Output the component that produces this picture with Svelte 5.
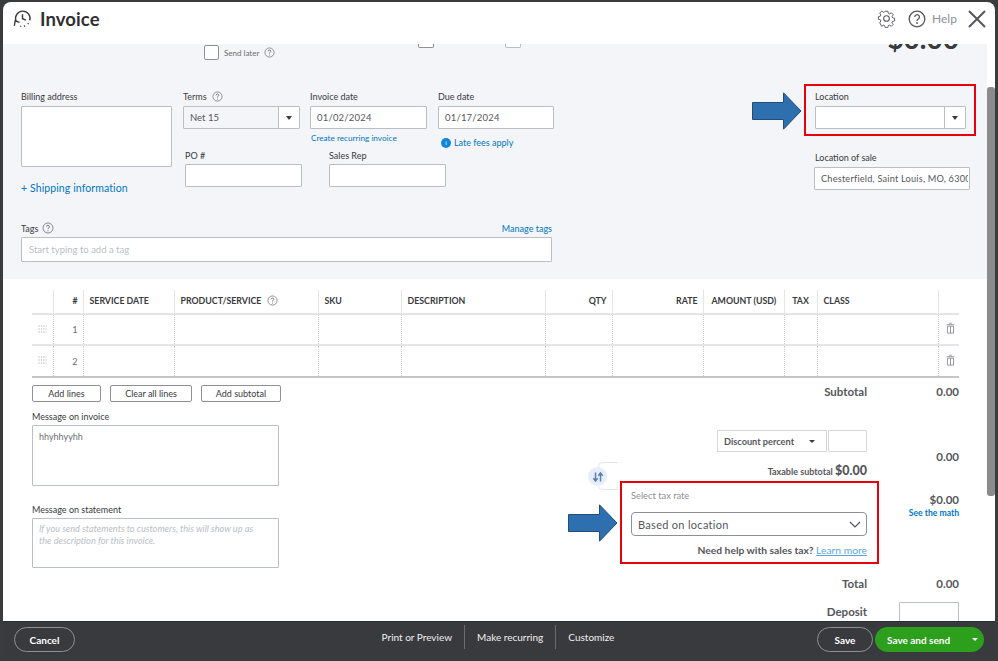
<script>
  const cols = [21, 30, 91, 144, 83, 144, 67, 91, 81, 33, 121, 21];
  const rows = [1, 2];
</script>

{#snippet help(cls = '')}
  <svg class="help {cls}" viewBox="0 0 12 12" aria-hidden="true"><circle cx="6" cy="6" r="5" fill="none" stroke="#7c7e84" stroke-width="0.9"/><path d="M4.6 4.7a1.4 1.4 0 1 1 2.1 1.2c-.5.3-.7.5-.7 1.1" fill="none" stroke="#5f6066" stroke-width="0.9"/><circle cx="6" cy="8.7" r=".55" fill="#5f6066"/></svg>
{/snippet}

{#snippet caret()}
  <span class="caret"><i></i></span>
{/snippet}

{#snippet trash()}
  <svg class="trash" viewBox="0 0 10 13" aria-hidden="true"><path d="M3.5 1.2h3M.8 2.8h8.4M1.6 4.5h6.8v7.7H1.6zM5 4.5v7.7" fill="none" stroke="#8d9096" stroke-width="1"/></svg>
{/snippet}

{#snippet grip()}
  <svg class="grip" viewBox="0 0 8 8" aria-hidden="true"><path d="M0 1h8M0 4h8M0 7h8" stroke="#a9abb0" stroke-width="1" stroke-dasharray="1.2 1.2"/></svg>
{/snippet}

<div class="frame">
  <header class="head">
    <svg class="logo" viewBox="0 0 20 20" aria-hidden="true">
      <path d="M3.2 12.5A7.6 7.6 0 1 1 17.6 12" fill="none" stroke="#393a3d" stroke-width="1.5"/>
      <path d="M1.4 17.8l.9-5.4 4.5 1.8" fill="none" stroke="#393a3d" stroke-width="1.4"/>
      <path d="M10 5.4v4.8l3.6 1.6" fill="none" stroke="#393a3d" stroke-width="1.5"/>
      <path d="M7.8 18.2h.9M11.6 18.1l1.2-.3M15.6 15.8l.7-.8" stroke="#393a3d" stroke-width="1.5"/>
    </svg>
    <h1>Invoice</h1>
    <div class="head-actions">
      <svg class="gear" viewBox="0 0 20 20" aria-hidden="true">
        <path d="M8.4 1.5h3.2l.5 2.4 1.5.7 2.1-1.3 2.2 2.3-1.3 2.1.6 1.5 2.3.5v3.1l-2.4.6-.6 1.4 1.3 2.1-2.2 2.2-2.1-1.3-1.5.6-.5 2.4H8.4l-.5-2.4-1.5-.6-2.1 1.3L2.1 15l1.3-2.1-.6-1.4-2.3-.6V7.8l2.3-.5.6-1.5L2.1 3.7l2.2-2.3 2.1 1.3 1.5-.7z" transform="translate(1 1) scale(.9)" fill="none" stroke="#55565b" stroke-width="1.1" stroke-linejoin="round"/>
        <circle cx="10" cy="10" r="3" fill="none" stroke="#55565b" stroke-width="1.1"/>
      </svg>
      <svg class="help-big" viewBox="0 0 18 18" aria-hidden="true"><circle cx="9" cy="9" r="7.8" fill="none" stroke="#55565b" stroke-width="1.3"/><path d="M6.8 7a2.3 2.3 0 1 1 3.5 2c-.9.5-1.3.9-1.3 1.9" fill="none" stroke="#55565b" stroke-width="1.3"/><circle cx="9" cy="13" r=".9" fill="#55565b"/></svg>
      <span class="help-text">Help</span>
      <svg class="close" viewBox="0 0 18 18" aria-hidden="true"><path d="M1 1l16 16M17 1L1 17" stroke="#55565b" stroke-width="2"/></svg>
    </div>
  </header>

  <div class="content">
    <div class="scroll">
      <section class="panel">
        <div class="strip">
          <label class="send-later"><span class="check"></span><span>Send later</span>{@render help()}</label>
          <span class="clipped-check one"></span>
          <span class="clipped-check two"></span>
          <span class="balance">$0.00</span>
        </div>

        <div class="form">
          <div class="form-left">
            <div class="address-row">
              <div class="billing">
                <div class="field">
                  <span class="label">Billing address</span>
                  <div class="box billing-box"></div>
                </div>
                <a class="shipping">+ Shipping information</a>
              </div>
              <div class="term-fields">
                <div class="row-one">
                  <div class="field w117">
                    <span class="label">Terms {@render help()}</span>
                    <div class="select"><span class="select-value">Net 15</span>{@render caret()}</div>
                  </div>
                  <div class="field w117">
                    <span class="label">Invoice date</span>
                    <div class="box input">01/02/2024</div>
                    <a class="recurring">Create recurring invoice</a>
                  </div>
                  <div class="field w116">
                    <span class="label">Due date</span>
                    <div class="box input">01/17/2024</div>
                    <div class="late"><span class="info">i</span><a>Late fees apply</a></div>
                  </div>
                </div>
                <div class="row-two">
                  <div class="field w117 tight">
                    <span class="label">PO #</span>
                    <div class="box small"></div>
                  </div>
                  <div class="field w117 tight">
                    <span class="label">Sales Rep</span>
                    <div class="box small"></div>
                  </div>
                </div>
              </div>
            </div>
            <div class="tags">
              <div class="tags-head">
                <span class="label">Tags {@render help('tag-help')}</span>
                <a class="manage">Manage tags</a>
              </div>
              <div class="box tag-input">Start typing to add a tag</div>
            </div>
          </div>

          <div class="form-right">
            <div class="field loc">
              <span class="label">Location</span>
              <div class="select"><span class="select-value"></span>{@render caret()}</div>
            </div>
            <div class="field sale">
              <span class="label">Location of sale</span>
              <div class="box sale-input"><span>Chesterfield, Saint Louis, MO, 63005</span></div>
            </div>
          </div>
        </div>
      </section>

      <section class="lines">
        <table>
          <colgroup>
            {#each cols as c}<col style="width:{c}px" />{/each}
          </colgroup>
          <thead>
            <tr>
              <th></th>
              <th class="r">#</th>
              <th>SERVICE DATE</th>
              <th>PRODUCT/SERVICE {@render help()}</th>
              <th>SKU</th>
              <th>DESCRIPTION</th>
              <th class="r">QTY</th>
              <th class="r">RATE</th>
              <th class="amt">AMOUNT (USD)</th>
              <th class="c">TAX</th>
              <th>CLASS</th>
              <th></th>
            </tr>
          </thead>
          <tbody>
            {#each rows as n}
              <tr>
                <td class="c">{@render grip()}</td>
                <td class="r num">{n}</td>
                <td></td><td></td><td></td><td></td><td></td><td></td><td></td><td></td><td></td>
                <td class="c">{@render trash()}</td>
              </tr>
            {/each}
          </tbody>
        </table>

        <div class="bottom">
          <div class="bottom-left">
            <div class="buttons">
              <button>Add lines</button>
              <button class="clear">Clear all lines</button>
              <button class="sub">Add subtotal</button>
            </div>
            <div class="field msg">
              <span class="label">Message on invoice</span>
              <div class="box msg-invoice">hhyhhyyhh</div>
            </div>
            <div class="field msg2">
              <span class="label">Message on statement</span>
              <div class="box msg-statement">If you send statements to customers, this will show up as<br />the description for this invoice.</div>
            </div>
          </div>

          <div class="totals">
            <div class="t-label subtotal">Subtotal</div>
            <div class="t-val subtotal">0.00</div>

            <div class="discount">
              <div class="discount-select"><span>Discount percent</span><i></i></div>
              <div class="box discount-input"></div>
            </div>
            <div class="t-val disc-val">0.00</div>

            <div class="taxable"><span>Taxable subtotal</span> <b>$0.00</b></div>

            <div class="tax">
              <div class="tax-title">Select tax rate</div>
              <div class="tax-select">
                <span>Based on location</span>
                <svg viewBox="0 0 12 7" aria-hidden="true"><path d="M1 1l5 5 5-5" fill="none" stroke="#55565b" stroke-width="1.2"/></svg>
              </div>
              <div class="tax-help">Need help with sales tax? <a>Learn more</a></div>
            </div>
            <div class="tax-val"><span>$0.00</span><a>See the math</a></div>

            <div class="t-label total">Total</div>
            <div class="t-val total">0.00</div>

            <div class="t-label deposit">Deposit</div>
            <div class="deposit-cell"><div class="box deposit-input"></div></div>
          </div>
        </div>
      </section>
    </div>
    <div class="scrollbar"><span></span></div>
  </div>

  <footer class="foot">
    <button class="ghost cancel">Cancel</button>
    <nav class="foot-links">
      <a>Print or Preview</a><a>Make recurring</a><a>Customize</a>
    </nav>
    <div class="foot-right">
      <button class="ghost save">Save</button>
      <button class="send"><span>Save and send</span><i></i></button>
    </div>
  </footer>

  <!-- annotations drawn over the screenshot -->
  <div class="redbox loc-box"></div>
  <div class="redbox tax-box"></div>
  <svg class="arrow a1" viewBox="0 0 50 38" aria-hidden="true"><path d="M.5 10.5h31V.8L49 19 31.5 37.2v-9.7H.5z" fill="#2e6fb0" stroke="#1f4e79"/></svg>
  <svg class="arrow a2" viewBox="0 0 50 38" aria-hidden="true"><path d="M.5 10.5h31V.8L49 19 31.5 37.2v-9.7H.5z" fill="#2e6fb0" stroke="#1f4e79"/></svg>
  <div class="swap">
    <span class="bracket"></span>
    <span class="swap-dot"><svg viewBox="0 0 12 12" aria-hidden="true"><path d="M3.5 1.5v8M1.3 7.2l2.2 2.8 2.2-2.8M8.5 10.5v-8M6.3 4.8l2.2-2.8 2.2 2.8" fill="none" stroke="#5f7fa8" stroke-width="1.5"/></svg></span>
  </div>
</div>

<style>
  :global(body) { margin: 0; background: #3a3b3d; }
  .frame {
    position: relative;
    width: 998px;
    height: 661px;
    box-sizing: border-box;
    padding: 2px 3px 4px;
    background: #3a3b3d;
    display: flex;
    flex-direction: column;
    overflow: hidden;
    font-family: Lato, "Open Sans", sans-serif;
    color: #393a3d;
  }
  a { color: #0077c5; }
  button { font-family: inherit; cursor: pointer; }

  .head {
    height: 42px;
    flex: none;
    background: #fff;
    border-radius: 8px 8px 0 0;
    display: flex;
    align-items: center;
    padding: 0 9px 9px 10px;
    box-sizing: border-box;
  }
  .logo { width: 19px; height: 19px; }
  h1 { margin: 0 0 0 8px; font-size: 18.5px; font-weight: 700; letter-spacing: .1px; color: #2f3033; }
  .head-actions { margin-left: auto; display: flex; align-items: center; }
  .gear { width: 19px; height: 19px; }
  .help-big { width: 18px; height: 18px; margin-left: 12px; }
  .help-text { font-size: 12px; color: #8d9096; margin-left: 6px; width: 36px; }
  .close { width: 18px; height: 18px; }

  .content { flex: 1; min-height: 0; display: flex; background: #fff; }
  .scroll { width: 984px; flex: none; min-height: 0; overflow: hidden; }
  .scrollbar { width: 8px; flex: none; padding-top: 43px; }
  .scrollbar span { display: block; height: 409px; background: #8b8b8b; border-radius: 3px; }

  .panel { height: 235px; background: #f4f5f8; overflow: hidden; box-sizing: border-box; }
  .strip { height: 47px; position: relative; display: flex; align-items: flex-start; padding-left: 201px; }
  .send-later { display: flex; align-items: center; font-size: 8px; color: #6b6c72; padding-top: 1px; }
  .check { width: 13px; height: 13px; border: 1px solid #8d9096; border-radius: 2px; background: #fff; margin-right: 5px; }
  .send-later .help { margin-left: 5px; }
  .clipped-check { width: 14px; height: 3px; border: 1px solid #8d9096; border-top: 0; border-radius: 0 0 2px 2px; background: #fff; }
  .clipped-check.one { margin-left: 143px; }
  .clipped-check.two { margin-left: 71px; border-color: #babec5; }
  .balance { margin-left: auto; margin-right: 28px; margin-top: -16px; font-size: 28px; line-height: 20px; font-weight: 700; color: #393a3d; }

  .help { width: 11px; height: 11px; vertical-align: -2px; margin-left: 3px; }
  .label { font-size: 9px; line-height: 12px; height: 12px; color: #393a3d; white-space: nowrap; }
  .field { display: flex; flex-direction: column; gap: 3px; }
  .field.tight { gap: 2px; }
  .w117 { width: 117px; flex: none; }
  .w116 { width: 116px; flex: none; margin-left: 1px; }
  .box { box-sizing: border-box; background: #fff; border: 1px solid #babec5; border-radius: 1px; }

  .form { display: flex; padding-left: 18px; }
  .form-left { width: 531px; flex: none; }
  .address-row { display: flex; height: 131px; }
  .billing { width: 151px; flex: none; }
  .billing-box { height: 61px; }
  .shipping { display: block; margin-top: 15px; font-size: 10.5px; letter-spacing: .1px; line-height: 13px; color: #0077c5; }

  .term-fields { margin-left: 11px; }
  .row-one { display: flex; gap: 10px; height: 59px; }
  .row-two { display: flex; gap: 27px; margin-left: 2px; }
  .select { display: flex; height: 23px; box-sizing: border-box; background: #fff; border: 1px solid #babec5; border-radius: 1px; }
  .select-value { flex: 1; padding-left: 6px; font-size: 9.5px; line-height: 21px; color: #55565b; background: #f4f5f8; border-right: 1px solid #babec5; }
  .loc .select-value { background: #fff; }
  .caret { width: 20px; background: #fff; display: flex; align-items: center; justify-content: center; }
  .caret i { border: 3px solid transparent; border-top: 4px solid #393a3d; border-bottom: 0; }
  .input { height: 23px; line-height: 21px; padding-left: 6px; font-size: 9.5px; color: #55565b; letter-spacing: .2px; }
  .recurring { font-size: 8.2px; line-height: 10px; color: #0077c5; margin: 1px 0 0 1px; white-space: nowrap; }
  .late { display: flex; align-items: center; gap: 3px; margin: 5px 0 0 3px; font-size: 9px; }
  .info { width: 10px; height: 10px; border-radius: 50%; background: #0f87d8; color: #fff; font-size: 6px; line-height: 10px; text-align: center; }
  .small { height: 23px; }

  .tags-head { display: flex; justify-content: space-between; align-items: center; height: 12px; }
  .tag-help { width: 12px; height: 12px; margin-left: 1px; }
  .manage { font-size: 9px; }
  .tag-input { height: 25px; margin-top: 3px; line-height: 23px; padding-left: 7px; font-size: 9.5px; color: #babec5; }

  .form-right { margin-left: 263px; }
  .loc { width: 151px; }
  .sale { width: 156px; margin-top: 23px; margin-left: -1px; }
  .sale .label { margin-left: 1px; }
  .sale-input { height: 23px; padding: 0 1px 0 6px; overflow: hidden; font-size: 9.2px; line-height: 21px; color: #55565b; white-space: nowrap; letter-spacing: .2px; }
  .sale-input span { display: block; overflow: hidden; }

  .lines { padding: 11px 28px 0 29px; }
  table { width: 927px; table-layout: fixed; border-collapse: collapse; }
  th { height: 24px; padding: 0 6px 2px; box-sizing: border-box; font-size: 8.8px; font-weight: 700; text-align: left; color: #393a3d; border-left: 1px solid #e3e5e8; border-bottom: 2px solid #e3e5e8; white-space: nowrap; vertical-align: middle; }
  th:first-child, td:first-child { border-left: 0; }
  th.r, td.r { text-align: right; padding-right: 5px; }
  th.amt { padding: 0 0 2px 8px; }
  th.c { text-align: center; padding-left: 0; padding-right: 0; }
  td { height: 31px; padding: 0; box-sizing: border-box; border-left: 1px dotted #c9ccd1; border-bottom: 2px solid #e3e5e8; }
  tbody tr:last-child td { height: 32px; border-bottom-color: #c4c6ca; }
  td.c { text-align: center; }
  .num { font-size: 9px; color: #6b6c72; }
  .grip { width: 9px; height: 8px; display: block; margin: -2px auto 0; }
  .trash { width: 9px; height: 12px; display: block; margin: -3px 0 0 7px; }

  .bottom { display: flex; justify-content: space-between; }
  .bottom-left { width: 250px; }
  .buttons { display: flex; gap: 9px; margin-top: 7px; }
  .buttons button { height: 17px; width: 69px; padding: 0; box-sizing: border-box; background: #fff; border: 1px solid #8d9096; border-radius: 2px; font-size: 9px; color: #393a3d; }
  .buttons .clear { width: 82px; }
  .buttons .sub { width: 80px; }
  .msg { margin-top: 9px; width: 247px; gap: 2px; }
  .msg-invoice { height: 61px; padding: 5px 6px; font-size: 9px; color: #6b6c72; }
  .msg2 { margin-top: 18px; width: 247px; gap: 2px; }
  .msg-statement { height: 50px; padding: 4px 2px 4px 6px; font-size: 9.2px; line-height: 12px; font-style: italic; color: #babec5; white-space: nowrap; }

  .totals { width: 339px; display: grid; grid-template-columns: 247px 92px; align-content: start; }
  .t-label { text-align: right; font-size: 11.5px; font-weight: 700; color: #55565b; line-height: 16px; }
  .t-val { text-align: right; font-size: 11.5px; font-weight: 700; color: #55565b; line-height: 16px; }
  .t-label.subtotal, .t-val.subtotal { margin-top: 6px; }
  .discount { grid-column: 1; grid-row: 2; margin-top: 30px; display: flex; justify-content: flex-end; gap: 1px; }
  .discount-select { width: 110px; height: 22px; box-sizing: border-box; border: 1px solid #d4d7dc; display: flex; align-items: center; justify-content: space-between; padding: 0 11px 0 6px; font-size: 9.2px; font-weight: 700; color: #55565b; }
  .discount-select i { border: 3px solid transparent; border-top: 3px solid #393a3d; border-bottom: 0; }
  .discount-input { width: 39px; height: 22px; border-color: #d4d7dc; }
  .disc-val { grid-column: 2; grid-row: 2 / 4; align-self: end; margin-bottom: 16px; }
  .taxable { grid-column: 1; grid-row: 3; margin-top: 10px; text-align: right; font-size: 9px; font-weight: 700; line-height: 18px; color: #55565b; }
  .taxable b { font-size: 12.5px; }
  .tax { grid-column: 1; grid-row: 4; margin-top: 9px; padding-left: 11px; }
  .tax-title { font-size: 9.3px; line-height: 12px; color: #8d9096; }
  .tax-select { margin-top: 10px; height: 24px; box-sizing: border-box; border: 1px solid #8d9096; border-radius: 4px; display: flex; align-items: center; justify-content: space-between; padding: 0 5px 0 6px; font-size: 11px; letter-spacing: .3px; color: #55565b; }
  .tax-select svg { width: 12px; height: 7px; }
  .tax-help { margin-top: 8px; text-align: right; font-size: 10.3px; line-height: 12px; font-weight: 700; color: #55565b; white-space: nowrap; }
  .tax-help a { color: #5aa5dc; font-weight: 400; text-decoration: underline; }
  .tax-val { grid-column: 2; grid-row: 4; margin-top: 11px; text-align: right; display: flex; flex-direction: column; font-size: 11.5px; line-height: 15px; font-weight: 700; color: #55565b; }
  .tax-val a { font-size: 8.6px; line-height: 13px; color: #0077c5; }
  .t-label.total, .t-val.total { margin-top: 20px; }
  .t-label.deposit { margin-top: 12px; }
  .deposit-cell { margin-top: 10px; display: flex; justify-content: flex-end; }
  .deposit-input { width: 60px; height: 30px; border-color: #babec5; }

  .foot {
    height: 36px;
    flex: none;
    display: grid;
    grid-template-columns: 1fr auto 1fr;
    align-items: center;
    padding: 0 11px 0 11px;
    background: #393a3d;
    border-top: 1px solid #2b2c2e;
    box-sizing: border-box;
  }
  .ghost { height: 25px; background: transparent; border: 1px solid #8d9096; border-radius: 13px; color: #fff; font-size: 10px; font-weight: 700; padding: 0; }
  .cancel { width: 61px; }
  .foot-links { display: flex; margin-left: 10px; padding-bottom: 5px; }
  .foot-links a { color: #f0f0f0; font-size: 10px; padding: 0 12px; border-left: 1px solid #6b6c72; line-height: 24px; white-space: nowrap; }
  .foot-links a:first-child { border-left: 0; padding-left: 0; }
  .foot-right { display: flex; justify-content: flex-end; gap: 2px; }
  .save { width: 56px; }
  .send { width: 109px; height: 25px; border: 0; border-radius: 13px; background: #2ca01c; color: #fff; font-size: 10px; font-weight: 700; display: flex; align-items: center; justify-content: space-between; padding: 0 6px 0 12px; }
  .send i { border: 3px solid transparent; border-top: 3px solid #fff; border-bottom: 0; }

  .redbox { position: absolute; box-sizing: border-box; border: 2px solid #e8000b; pointer-events: none; }
  .loc-box { left: 804px; top: 84px; width: 172px; height: 52px; }
  .tax-box { left: 620px; top: 481px; width: 259px; height: 83px; }
  .arrow { position: absolute; width: 50px; height: 38px; }
  .a1 { left: 752px; top: 92px; }
  .a2 { left: 568px; top: 504px; }
  .swap { position: absolute; left: 588px; top: 462px; width: 30px; height: 29px; }
  .bracket { position: absolute; left: 10px; top: 0; width: 20px; height: 28px; box-sizing: border-box; border: 1px solid #e3e5e8; border-right: 0; border-radius: 5px 0 0 5px; }
  .swap-dot { position: absolute; left: 0; top: 5px; width: 19px; height: 19px; border-radius: 50%; background: #e6eff9; display: flex; align-items: center; justify-content: center; }
  .swap-dot svg { width: 12px; height: 12px; }
</style>
